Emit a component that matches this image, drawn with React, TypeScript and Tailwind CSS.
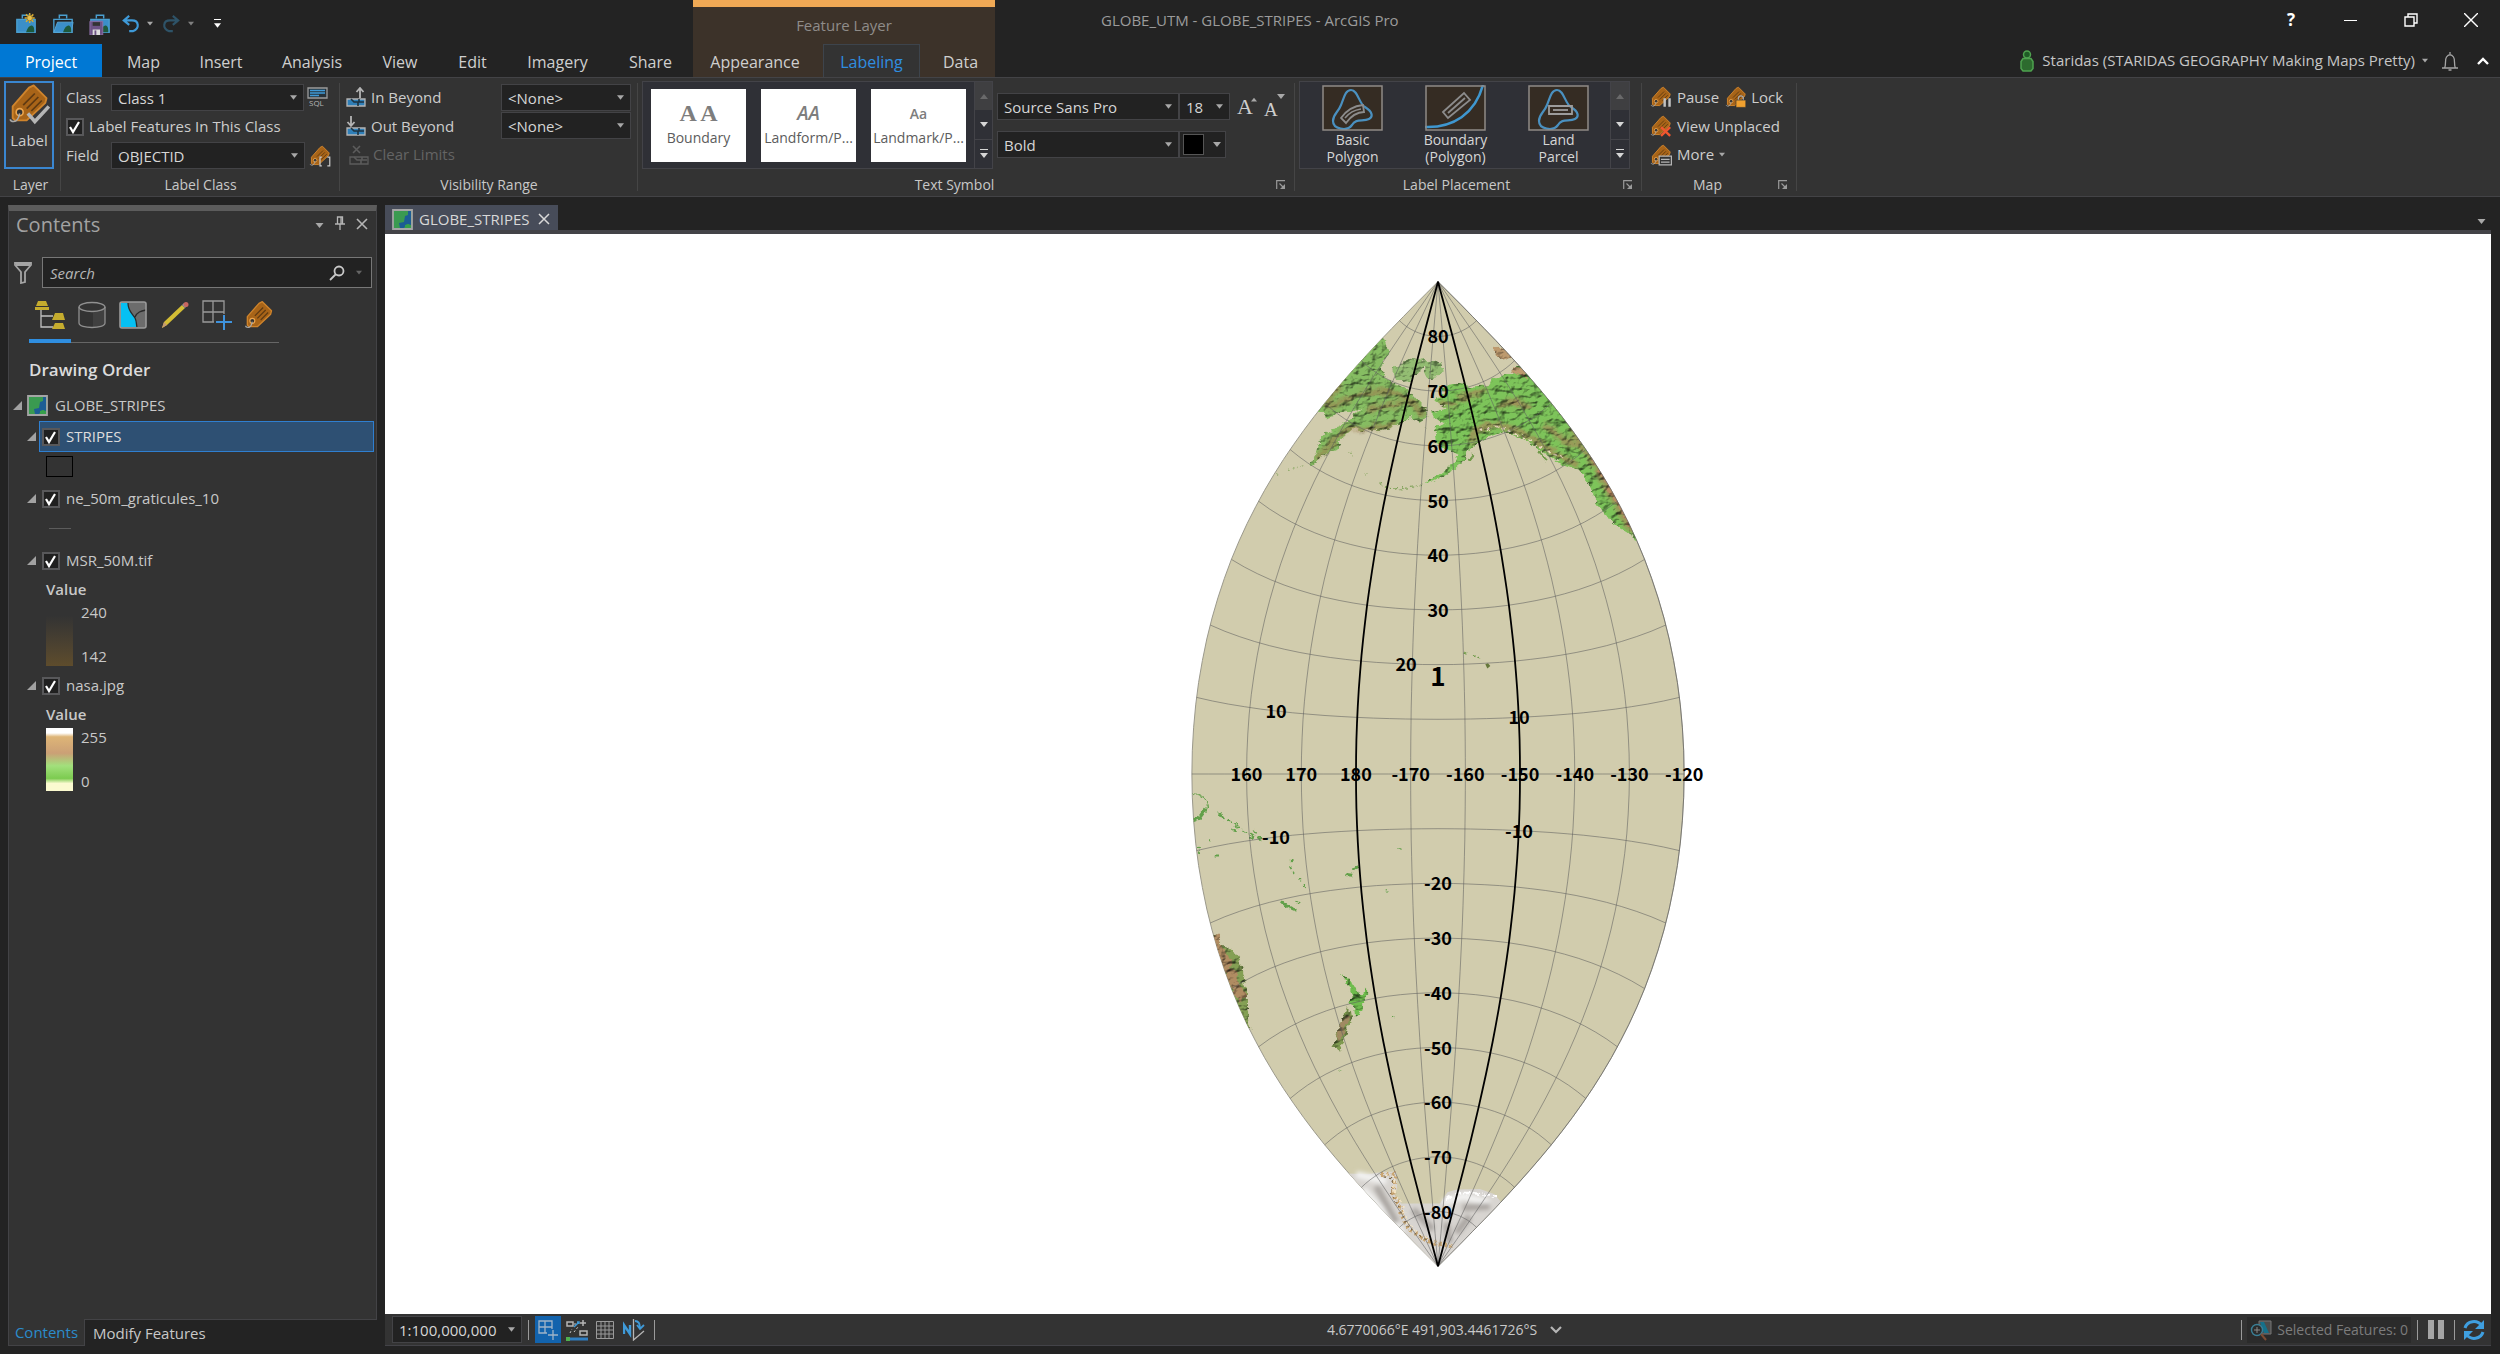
import type { ReactNode } from "react";

/* ---------- small shared pieces ---------- */

const Caret = ({ className = "" }: { className?: string }) => (
    <svg viewBox="0 0 8 5" className={`h-[5px] w-2 shrink-0 fill-[#a8a8a8] ${className}`} aria-hidden>
        <path d="M0 0h8L4 5z" />
    </svg>
);

const TagShape = () => (
    <g strokeLinejoin="round">
        <path d="M22 2l11 11-1 4-16 15H6L4 30V20L18 4z" fill="#a86418" stroke="#cf842c" strokeWidth="1.6" />
        <path d="M13 19l10-10M16 22l10-10M20 24l9-9" stroke="#5f3a12" strokeWidth="1.5" />
        <circle cx="10" cy="25" r="3" fill="#333" stroke="#eda64e" strokeWidth="1.4" />
        <path d="M10 26c-1 5-3 7-5 7s-3-1-3-2" fill="none" stroke="#a9a9a9" strokeWidth="1.4" />
    </g>
);

const TagIcon = ({ children, className = "size-[22px]" }: { children?: ReactNode; className?: string }) => (
    <svg viewBox="0 0 36 36" className={`shrink-0 ${className}`} aria-hidden>
        <TagShape />
        {children}
    </svg>
);

type SelectBoxProps = { label: string; options: string[]; className?: string };

const SelectBox = ({ label, options, className = "" }: SelectBoxProps) => (
    <span className={`relative flex h-[27px] items-center border border-[#434346] bg-[#222222] ${className}`}>
        <select
            aria-label={label}
            className="h-full w-full appearance-none bg-transparent pl-[6px] pr-5 pt-px text-[15px] text-[#d6d6d6] outline-none"
        >
            {options.map((option) => (
                <option key={option}>{option}</option>
            ))}
        </select>
        <Caret className="pointer-events-none absolute right-[6px] w-[7px] fill-[#939393]" />
    </span>
);

const Check = ({ id, label }: { id: string; label: string }) => (
    <span className="relative flex size-[18px] shrink-0">
        <input
            id={id}
            type="checkbox"
            defaultChecked
            aria-label={label}
            className="peer size-[18px] appearance-none border-2 border-[#58585a] bg-[#202020]"
        />
        <svg viewBox="0 0 18 18" className="pointer-events-none absolute inset-0 hidden peer-checked:block" aria-hidden>
            <path d="M4 9l3 5 6-10" fill="none" stroke="#fff" strokeWidth="2.2" />
        </svg>
    </span>
);

const DialogLauncher = ({ label }: { label: string }) => (
    <button aria-label={label} className="absolute bottom-[6px] right-[9px]">
        <svg viewBox="0 0 10 10" className="size-[10px]" aria-hidden>
            <path d="M.7 9V.7H9M3.5 3.5L7 7" fill="none" stroke="#9a9a9a" strokeWidth="1.2" />
            <path d="M9 4v5H4z" fill="#9a9a9a" />
        </svg>
    </button>
);

type GroupProps = { title: string; className: string; launcher?: boolean; children: ReactNode };

const Group = ({ title, className, launcher, children }: GroupProps) => (
    <section className={`relative flex shrink-0 flex-col pt-[3px] ${className}`}>
        <div className="flex h-[88px]">{children}</div>
        <h2 className={`flex flex-1 items-center justify-center pt-[3px] text-[14px] text-[#c8c8c8] ${launcher ? "pr-[24px]" : ""}`}>
            {title}
        </h2>
        {launcher && <DialogLauncher label={`${title} options`} />}
        <span className="absolute inset-y-[5px] right-0 w-px bg-[#454545]" />
    </section>
);

const GalleryScroll = ({ name }: { name: string }) => (
    <div className="ml-auto flex w-[19px] flex-col border-l border-[#434348]">
        <button aria-label={`Scroll ${name} up`} className="flex flex-1 items-center justify-center bg-[#3f3f41]">
            <Caret className="rotate-180 opacity-40" />
        </button>
        <button aria-label={`Scroll ${name} down`} className="flex flex-1 items-center justify-center border-b border-[#434348]">
            <Caret className="fill-[#d6d6d6]" />
        </button>
        <button aria-label={`Expand ${name}`} className="flex flex-1 flex-col items-center justify-center gap-[3px]">
            <span className="h-px w-2 bg-[#d6d6d6]" />
            <Caret className="fill-[#d6d6d6]" />
        </button>
    </div>
);

/* ---------- header ---------- */

const ProjectIcon = ({ kind }: { kind: "new" | "open" | "save" }) => (
    <svg viewBox="0 0 24 24" className="size-[22px]" aria-hidden>
        <path d="M8 6V2.500h8V6" fill="none" stroke="#4a9fd0" strokeWidth="1.6" />
        <path d="M2 7h20v14H2z" fill={kind === "open" ? "#232323" : "#3b8fc9"} stroke="#4a9fd0" strokeWidth="1.5" />
        {kind === "open" && <path d="M2 21l4-11h17l-2 11z" fill="#3b8fc9" stroke="#5aa9d8" />}
        <path d="M12 21c2-6 5-8 7-7s2 4 2 7z" fill="#1d5a3d" />
        {kind === "new" && (
            <g>
                <path d="M16 0v11M10.500 5.500h11M12 1.500l8 8M20 1.500l-8 8" stroke="#d9ae35" strokeWidth="1.6" />
                <circle cx="16" cy="5.500" r="3" fill="#e6c050" stroke="#9b7c25" />
            </g>
        )}
        {kind === "save" && (
            <g>
                <path d="M1 9h14v15H1z" fill="#6d5385" stroke="#8c70a6" />
                <path d="M4 10h8v4H4z" fill="#333" />
                <path d="M4 18h8v6H4z" fill="#ddd" />
                <path d="M6 19h2v5H6z" fill="#6d5385" />
            </g>
        )}
    </svg>
);

const UndoArrow = ({ redo }: { redo?: boolean }) => (
    <svg viewBox="0 0 20 20" className={`h-5 w-[18px] ${redo ? "-scale-x-100" : ""}`} aria-hidden>
        <path d="M8 1L2 6l6 5M2 6h9c8 0 9 9 1 12H8" fill="none" stroke={redo ? "#2e5368" : "#3f9ad8"} strokeWidth="2.4" />
    </svg>
);

const QuickAccess = () => (
    <div className="flex h-[44px] items-center pl-[15px] pt-[3px]">
        <button aria-label="New project"><ProjectIcon kind="new" /></button>
        <button aria-label="Open project" className="ml-[15px]"><ProjectIcon kind="open" /></button>
        <button aria-label="Save project" className="ml-[15px]"><ProjectIcon kind="save" /></button>
        <button aria-label="Undo" className="ml-[11px] flex items-center gap-[7px]">
            <UndoArrow /><Caret className="w-[6px]" />
        </button>
        <button aria-label="Redo" className="ml-[9px] flex items-center gap-[8px]">
            <UndoArrow redo /><Caret className="w-[6px] opacity-70" />
        </button>
        <button aria-label="Customize" className="ml-[20px] flex flex-col items-center gap-[3px]">
            <span className="h-px w-[7px] bg-white" />
            <Caret className="w-[7px] fill-white" />
        </button>
    </div>
);

const tabs = [
    { name: "Map", width: "w-[73px]" },
    { name: "Insert", width: "w-[82px]" },
    { name: "Analysis", width: "w-[100px]" },
    { name: "View", width: "w-[76px]" },
    { name: "Edit", width: "w-[69px]" },
    { name: "Imagery", width: "w-[101px]" },
    { name: "Share", width: "w-[85px]" },
];

const Header = () => (
    <header className="flex h-[77px] shrink-0 text-[16px]">
        <div className="w-[693px] shrink-0">
            <QuickAccess />
            <nav className="flex h-[33px] text-[#cfcfcf]">
                <button className="mr-[5px] w-[102px] bg-[#0078d4] pt-[3px] text-white">Project</button>
                {tabs.map((tab) => (
                    <button key={tab.name} className={`pt-[3px] ${tab.width}`}>{tab.name}</button>
                ))}
            </nav>
        </div>
        <div className="flex w-[302px] shrink-0 flex-col border-t-[7px] border-[#f0a955] bg-[#3c3229]">
            <p className="flex h-[37px] items-center justify-center text-[15px] text-[#8f8c89]">Feature Layer</p>
            <nav className="flex h-[33px] text-[#cfcfcf]">
                <button className="w-[130px] pr-[6px] pt-[3px]">Appearance</button>
                <button className="w-[97px] border border-b-0 border-[#3d444c] bg-[#333333] pt-[2px] text-[#2f8ee0]">Labeling</button>
                <button className="w-[75px] pl-[6px] pt-[3px]">Data</button>
            </nav>
        </div>
        <div className="min-w-0 flex-1">
            <div className="flex h-[44px] items-center">
                <h1 className="ml-[106px] pb-[3px] text-[15px] text-[#9b9b9b]">GLOBE_UTM - GLOBE_STRIPES - ArcGIS Pro</h1>
                <div className="ml-auto flex items-center pb-[4px] pr-[22px] text-white">
                    <button aria-label="Help" className="mr-[49px] text-[17px] font-bold">?</button>
                    <button aria-label="Minimize" className="mr-[47px]"><span className="block h-px w-[13px] bg-white" /></button>
                    <button aria-label="Restore" className="mr-[46px]">
                        <svg viewBox="0 0 14 14" className="size-[14px]" aria-hidden>
                            <path d="M1 4h9v9H1zM4 4V1h9v9h-3" fill="none" stroke="#fff" strokeWidth="1.4" />
                        </svg>
                    </button>
                    <button aria-label="Close">
                        <svg viewBox="0 0 14 14" className="size-[14px]" aria-hidden>
                            <path d="M0 0l14 14M14 0L0 14" stroke="#fff" strokeWidth="1.4" />
                        </svg>
                    </button>
                </div>
            </div>
            <div className="flex h-[33px] items-center justify-end pr-[11px] text-[15px] text-[#c6c6c6]">
                <svg viewBox="0 0 14 22" className="mr-[8px] h-[22px] w-[14px]" aria-hidden>
                    <circle cx="7" cy="4.500" r="3.500" fill="#1f5c26" stroke="#4ea24f" strokeWidth="1.5" />
                    <path d="M3 8.500h8l2 3v7l-2 2.500H3l-2-2.500v-7z" fill="#2d6b2e" stroke="#4ea24f" strokeWidth="1.5" />
                </svg>
                <button className="flex items-center gap-[7px]">
                    Staridas (STARIDAS GEOGRAPHY Making Maps Pretty)
                    <Caret className="w-[6px]" />
                </button>
                <button aria-label="Notifications" className="ml-[13px]">
                    <svg viewBox="0 0 18 20" className="h-5 w-[18px]" fill="none" stroke="#a5a5a5" strokeWidth="1.3" aria-hidden>
                        <path d="M1 17h16M3.500 17c2-4 0-8 2-11 2-3 5-3 7 0s0 7 2 11M9 3V1M7.500 19h3" />
                    </svg>
                </button>
                <button aria-label="Collapse ribbon" className="ml-[18px]">
                    <svg viewBox="0 0 12 8" className="h-2 w-3" aria-hidden>
                        <path d="M1 7l5-5 5 5" fill="none" stroke="#fff" strokeWidth="2.4" />
                    </svg>
                </button>
            </div>
        </div>
    </header>
);

/* ---------- ribbon ---------- */

const RangeIcon = ({ kind }: { kind: "in" | "out" | "clear" }) => {
    const muted = kind === "clear";
    return (
        <svg viewBox="0 0 20 20" className="size-5" aria-hidden>
            <path d="M1 12h18v7H1z" fill={muted ? "none" : "#2f7fb8"} stroke={muted ? "#5c5c5c" : "#b5b5b5"} strokeWidth="1.3" />
            <path d="M5 12l3 3h4v4M13 12v3h5" fill="none" stroke={muted ? "#5c5c5c" : "#1f3340"} strokeWidth="1.600" />
            {kind === "in" && <path d="M14 11V1M10.500 5L14 1l3.500 4" fill="none" stroke="#b5b5b5" strokeWidth="1.800" />}
            {kind === "out" && <path d="M5 0v10M1.500 6L5 10l3.500-4" fill="none" stroke="#b5b5b5" strokeWidth="1.800" />}
            {muted && <path d="M4 1l7 7M11 1L4 8" stroke="#5c5c5c" strokeWidth="1.6" />}
        </svg>
    );
};

const textStyles = [
    { name: "Boundary", sample: "A A", look: "text-[24px] font-bold [font-family:'Liberation_Serif',serif]" },
    { name: "Landform/P...", sample: "AA", look: "text-[19px] font-semibold italic" },
    { name: "Landmark/P...", sample: "Aa", look: "text-[14px] font-semibold" },
];

const blob = "M29 5c7 0 8 14 14 17 8 5 8 10 4 12-6 3-13-1-17 6-5 7-19 4-19-4 0-7 5-8 8-16 3-7 4-15 10-15z";

const placements = [
    {
        name: "Basic Polygon",
        art: (
            <>
                <path d={blob} fill="none" stroke="#4a90bf" strokeWidth="2.200" />
                <path d="M19 33c5-7 11-12 22-13l1 7c-8 0-13 4-18 11z" fill="none" stroke="#8c8c8c" strokeWidth="1.800" />
                <path d="M23 33c4-5 9-8 16-9" fill="none" stroke="#8c8c8c" strokeWidth="1.6" />
            </>
        ),
    },
    {
        name: "Boundary (Polygon)",
        art: (
            <>
                <path d="M0 42c28 1 50-13 58-42" fill="none" stroke="#3f97cf" strokeWidth="2.600" />
                <path d="M18 27L39 8l6 7-22 18z" fill="none" stroke="#8c8c8c" strokeWidth="1.800" />
                <path d="M23 28l17-15" stroke="#8c8c8c" strokeWidth="1.800" />
            </>
        ),
    },
    {
        name: "Land Parcel",
        art: (
            <>
                <path d={blob} fill="none" stroke="#4a90bf" strokeWidth="2.200" />
                <path d="M21 21h23v8H21z" fill="none" stroke="#9c9c9c" strokeWidth="1.800" />
                <path d="M25 25h15" stroke="#9c9c9c" strokeWidth="1.800" />
            </>
        ),
    },
];

const Ribbon = () => (
    <div className="flex h-[120px] shrink-0 overflow-hidden border-y border-[#434346] bg-[#333333] text-[15px] text-[#cdcdcd]">
        <Group title="Layer" className="w-[61px]">
            <button className="ml-[4px] flex w-[50px] flex-col items-center border-2 border-[#3a86d0] bg-[#363638]">
                <TagIcon className="h-[42px] w-[42px]">
                    <path d="M17 26l6 7 12-13" fill="none" stroke="#b5b5b5" strokeWidth="3" />
                </TagIcon>
                <span className="mt-[4px]">Label</span>
            </button>
        </Group>

        <Group title="Label Class" className="w-[279px]">
            <div className="ml-[5px] mt-[3px] flex flex-col">
                <div className="flex items-center">
                    <span className="w-[45px]">Class</span>
                    <SelectBox label="Class" options={["Class 1"]} className="w-[193px]" />
                    <button aria-label="SQL query" className="ml-[3px]">
                        <svg viewBox="0 0 21 22" className="h-[22px] w-[21px]" aria-hidden>
                            <path d="M1 1h19v10H1z" fill="#26323a" stroke="#9c9c9c" strokeWidth="1.300" />
                            <path d="M3 3.500h15M3 6h15M3 8.500h9" stroke="#3f9ad8" strokeWidth="1.300" />
                            <text x="2" y="19" fontSize="8" fill="#b5b5b5">SQL</text>
                        </svg>
                    </button>
                </div>
                <label htmlFor="label-features" className="flex h-[31px] items-center gap-[5px]">
                    <Check id="label-features" label="Label Features In This Class" />
                    Label Features In This Class
                </label>
                <div className="flex items-center">
                    <span className="w-[45px]">Field</span>
                    <SelectBox label="Field" options={["OBJECTID"]} className="w-[194px]" />
                    <button aria-label="Label expression" className="ml-[4px]">
                        <TagIcon>
                            <path d="M21 20h-3v14h3M30 20h4v14h-4" fill="none" stroke="#c9c9c9" strokeWidth="2" />
                        </TagIcon>
                    </button>
                </div>
            </div>
        </Group>

        <Group title="Visibility Range" className="w-[298px]">
            <div className="flex w-[155px] flex-col pl-[6px] pt-px">
                <span className="flex h-[30px] items-center gap-[5px]"><RangeIcon kind="in" />In Beyond</span>
                <span className="flex h-[29px] items-center gap-[5px]"><RangeIcon kind="out" />Out Beyond</span>
                <button disabled className="flex h-[29px] items-center gap-[4px] pl-[3px] text-[#646464]">
                    <RangeIcon kind="clear" />Clear Limits
                </button>
            </div>
            <div className="ml-[6px] mt-[3px] flex flex-col gap-px">
                <SelectBox label="In beyond scale" options={["<None>"]} className="w-[130px]" />
                <SelectBox label="Out beyond scale" options={["<None>"]} className="w-[130px]" />
            </div>
        </Group>

        <Group title="Text Symbol" className="w-[657px]" launcher>
            <div className="ml-[4px] flex w-[351px] border border-[#434348] bg-[#2f3036]">
                <div className="flex gap-[15px] px-[8px] py-[7px]">
                    {textStyles.map((style) => (
                        <button key={style.name} className="flex h-[73px] w-[95px] flex-col items-center bg-white pt-[10px] text-[14px] text-[#5c5c5c]">
                            <span className={`flex h-[28px] items-center text-[#7d7d7d] ${style.look}`}>{style.sample}</span>
                            <span className="whitespace-nowrap">{style.name}</span>
                        </button>
                    ))}
                </div>
                <GalleryScroll name="text symbols" />
            </div>
            <div className="ml-[4px] mt-[12px] flex flex-col gap-[11px]">
                <div className="flex items-center">
                    <SelectBox label="Font" options={["Source Sans Pro"]} className="w-[182px]" />
                    <SelectBox label="Font size" options={["18"]} className="w-[51px]" />
                    <button aria-label="Increase font size" className="ml-[7px] flex text-[22px] leading-none [font-family:'Liberation_Serif',serif]">
                        A<Caret className="-ml-[2px] mt-px w-[6px] rotate-180" />
                    </button>
                    <button aria-label="Decrease font size" className="ml-[7px] flex text-[19px] leading-none [font-family:'Liberation_Serif',serif]">
                        <span className="mt-[6px]">A</span><Caret className="-ml-px" />
                    </button>
                </div>
                <div className="flex">
                    <SelectBox label="Font style" options={["Bold"]} className="w-[182px]" />
                    <button aria-label="Text color" className="flex h-[27px] w-[47px] items-center justify-between border border-[#434346] bg-[#222222] px-[3px]">
                        <span className="size-[21px] border border-[#555555] bg-black" />
                        <Caret className="mr-px" />
                    </button>
                </div>
            </div>
        </Group>

        <Group title="Label Placement" className="w-[347px]" launcher>
            <div className="ml-[4px] flex w-[331px] border border-[#434348] bg-[#2f3036]">
                <div className="flex pl-px">
                    {placements.map((item) => (
                        <button key={item.name} className="flex w-[103px] flex-col items-center px-[16px] pt-[3px] text-[14px] leading-[17px] text-[#d6d6d6]">
                            <svg viewBox="0 0 61 46" className="h-[46px] w-[61px]" aria-hidden>
                                <path d="M.5.5h60v45H.500z" fill="#352c23" />
                                {item.art}
                                <path d="M1 1h59v44H1z" fill="none" stroke="#8f8b88" strokeWidth="1.500" />
                            </svg>
                            <span>{item.name}</span>
                        </button>
                    ))}
                </div>
                <GalleryScroll name="label placements" />
            </div>
        </Group>

        <Group title="Map" className="w-[155px]" launcher>
            <div className="flex flex-col pl-[8px] pt-px">
                <div className="flex h-[30px] items-center">
                    <button className="flex items-center gap-[5px]">
                        <TagIcon><path d="M24 20v14M32 20v14" stroke="#c2c2c2" strokeWidth="4" /></TagIcon>
                        Pause
                    </button>
                    <button className="ml-[6px] flex items-center gap-[4px]">
                        <TagIcon>
                            <path d="M22 24v-4c0-5 8-5 8 0v4" fill="none" stroke="#a9a9a9" strokeWidth="2" />
                            <path d="M18 23h16v12H18z" fill="#f0a02f" stroke="#333" />
                        </TagIcon>
                        Lock
                    </button>
                </div>
                <button className="flex h-[29px] items-center gap-[5px] whitespace-nowrap">
                    <TagIcon><path d="M18 20l15 14M33 20L18 34" stroke="#f0572f" strokeWidth="4" /></TagIcon>
                    View Unplaced
                </button>
                <button className="flex h-[29px] items-center gap-[5px]">
                    <TagIcon>
                        <path d="M15 20h20v14H15z" fill="#333" stroke="#b5b5b5" strokeWidth="2" />
                        <path d="M18 25h14M18 29.500h14" stroke="#b5b5b5" strokeWidth="2" />
                    </TagIcon>
                    More
                    <Caret className="w-[6px]" />
                </button>
            </div>
        </Group>
    </div>
);

/* ---------- contents pane ---------- */

const MapGlyph = () => (
    <svg viewBox="0 0 21 21" className="size-[21px] shrink-0" aria-hidden>
        <path d="M1 1h19v19H1z" fill="#3a9a50" stroke="#a5a5a5" strokeWidth="1.800" />
        <path d="M19 2v14l-4-1-3 4H8l-1-5 5-1 1-6 3-1V2z" fill="#1c5d94" />
        <path d="M13 19v-3l4-1 2 4z" fill="#36a04b" />
    </svg>
);

const Twisty = () => (
    <button aria-label="Collapse" className="flex shrink-0">
        <svg viewBox="0 0 10 10" className="size-[9px] fill-[#a2a2a2]" aria-hidden>
            <path d="M10 0v10H0z" />
        </svg>
    </button>
);

const LayerRow = ({ name, selected }: { name: string; selected?: boolean }) => (
    <div className="flex h-[31px] items-center gap-[3px] pl-[18px] pr-[2px]">
        <Twisty />
        <label
            className={`flex h-full flex-1 items-center gap-[6px] border pl-[2px] ${
                selected ? "border-[#2f7fd0] bg-[#2e5073] text-[#dddddd]" : "border-transparent"
            }`}
        >
            <Check id={name} label={name} />
            {name}
        </label>
    </div>
);

const Ramp = ({ high, low, fill }: { high: string; low: string; fill: string }) => (
    <div className="ml-[37px] flex h-[63px] gap-[8px]">
        <span className={`w-[27px] ${fill}`} />
        <span className="flex flex-col justify-between leading-[19px]">
            <span>{high}</span>
            <span>{low}</span>
        </span>
    </div>
);

const ContentsTabs = () => (
    <div className="ml-[20px] mt-[12px] flex w-[250px] border-b border-[#666666]">
        <button aria-label="List by drawing order" className="-mb-px flex h-[43px] w-[42px] justify-center border-b-4 border-[#2f8ee0]">
            <svg viewBox="0 0 30 30" className="size-[30px]" aria-hidden>
                <path d="M6 10v17h12M6 16h12" fill="none" stroke="#c2c2c2" strokeWidth="1.300" />
                <path d="M3 1h8l2 5H1zM0 7h14v3H0zM20 13h8l2 7H17zM20 23h8l2 6H17z" fill="#c5ac2e" />
            </svg>
        </button>
        <button aria-label="List by data source" className="flex w-[41px] justify-center pt-px">
            <svg viewBox="0 0 28 28" className="size-[28px]" fill="none" stroke="#909090" strokeWidth="1.300" aria-hidden>
                <path d="M15 11l12-3v14c-1 3-6 5-12 5z" fill="#404040" stroke="none" />
                <ellipse cx="14" cy="6" rx="13" ry="4.500" />
                <path d="M1 6v16c0 6 26 6 26 0V6" />
            </svg>
        </button>
        <button aria-label="List by selection" className="flex w-[42px] justify-center pt-px">
            <svg viewBox="0 0 28 28" className="size-[28px]" aria-hidden>
                <rect x="1" y="1" width="26" height="26" rx="2" fill="#6c6c6c" />
                <path d="M2 2h7c0 8 4 10 7 15 2 4 1 6 2 9H2z" fill="#06c0f3" />
                <path d="M9 2c0 8 4 10 7 15 2 4 1 6 2 9M16 16c2-5 6-6 11-7" fill="none" stroke="#2a2a2a" strokeWidth="1.300" />
                <rect x="1" y="1" width="26" height="26" rx="2" fill="none" stroke="#9a9a9a" strokeWidth="1.600" />
            </svg>
        </button>
        <button aria-label="List by editing" className="flex w-[42px] justify-center pt-px">
            <svg viewBox="0 0 28 28" className="size-[28px]" aria-hidden>
                <path d="M1 27l2-6L21 4l3 3L6 24z" fill="#d3bd35" />
                <path d="M1 27l2-6 3 3z" fill="#c79a72" />
                <path d="M21 4l2-2 3 3-2 2z" fill="#9a9a9a" />
                <circle cx="25" cy="3.500" r="2.500" fill="#c86660" />
            </svg>
        </button>
        <button aria-label="List by snapping" className="flex w-[42px] justify-center">
            <svg viewBox="0 0 30 30" className="size-[30px]" fill="none" strokeWidth="1.300" aria-hidden>
                <path d="M22 14V1H1v21h11M1 12h21M11 1v21" stroke="#9a9a9a" />
                <path d="M22 15v15M14 22h16" stroke="#3f93dd" strokeWidth="2" />
            </svg>
        </button>
        <button aria-label="List by labeling" className="flex w-[41px] justify-center">
            <TagIcon className="size-[30px]" />
        </button>
    </div>
);

const ContentsPane = () => (
    <aside className="ml-[8px] flex w-[369px] shrink-0 flex-col text-[15px] text-[#c8c8c8]">
        <div className="flex flex-1 flex-col border-x border-t-[6px] border-x-[#434346] border-t-[#5c5c5c] bg-[#333333]">
            <div className="flex h-[28px] items-center pl-[7px] pr-[8px]">
                <h2 className="text-[20px] text-[#a2a2a2]">Contents</h2>
                <button aria-label="Pane menu" className="ml-auto"><Caret className="w-[9px]" /></button>
                <button aria-label="Auto hide" className="mb-[4px] ml-[11px]">
                    <svg viewBox="0 0 10 14" className="h-[14px] w-[10px]" fill="none" stroke="#b5b5b5" strokeWidth="1.300" aria-hidden>
                        <path d="M2.500 8V1h5v7M6 1v7M0 8h10M5 8v6" />
                    </svg>
                </button>
                <button aria-label="Close pane" className="mb-[3px] ml-[11px]">
                    <svg viewBox="0 0 12 12" className="size-[12px]" aria-hidden>
                        <path d="M1 1l10 10M11 1L1 11" stroke="#b5b5b5" strokeWidth="1.600" />
                    </svg>
                </button>
            </div>
            <div className="mt-[18px] flex items-center pl-[5px] pr-[4px]">
                <button aria-label="Filter">
                    <svg viewBox="0 0 18 22" className="h-[22px] w-[18px]" fill="none" stroke="#a5a5a5" strokeWidth="1.800" aria-hidden>
                        <path d="M1 1h16v2l-6 7v10l-4 1V10L1 3zM2 3h14" />
                    </svg>
                </button>
                <div className="ml-[10px] flex h-[31px] flex-1 items-center border border-[#777777] bg-[#222222] pl-[7px] pr-[9px]">
                    <input
                        aria-label="Search"
                        placeholder="Search"
                        className="min-w-0 flex-1 bg-transparent pt-px italic outline-none placeholder:text-[#b5b5b5]"
                    />
                    <button aria-label="Run search">
                        <svg viewBox="0 0 16 16" className="size-[16px]" fill="none" stroke="#c8c8c8" strokeWidth="1.800" aria-hidden>
                            <circle cx="10" cy="6" r="4.500" />
                            <path d="M7 9l-6 6" />
                        </svg>
                    </button>
                    <Caret className="ml-[11px] w-[6px] opacity-50" />
                </div>
            </div>
            <ContentsTabs />
            <h3 className="ml-[20px] mt-[14px] text-[17px] font-semibold leading-[26px] text-[#dcdcdc]">Drawing Order</h3>
            <div className="mt-[7px] flex h-[31px] items-center pl-[4px]">
                <Twisty />
                <span className="ml-[5px] flex items-center gap-[7px]"><MapGlyph />GLOBE_STRIPES</span>
            </div>
            <LayerRow name="STRIPES" selected />
            <span className="ml-[37px] mt-[4px] h-[21px] w-[27px] border border-black" />
            <div className="mt-[6px]"><LayerRow name="ne_50m_graticules_10" /></div>
            <span className="ml-[40px] mt-[14px] h-px w-[22px] bg-[#5c5c5c]" />
            <div className="mt-[16px]"><LayerRow name="MSR_50M.tif" /></div>
            <p className="ml-[37px] font-semibold leading-[27px]">Value</p>
            <Ramp high="240" low="142" fill="bg-linear-to-b from-[#333333] from-20% to-[#5e4c2c]" />
            <div className="mt-[4px]"><LayerRow name="nasa.jpg" /></div>
            <p className="ml-[37px] font-semibold leading-[27px]">Value</p>
            <Ramp
                high="255"
                low="0"
                fill="bg-[linear-gradient(180deg,#ffffff_8%,#deb577_14%,#cba076_40%,#a2e07c_60%,#7ccb50_80%,#fbfad0_88%)]"
            />
        </div>
        <nav className="flex h-[27px]">
            <button className="w-[77px] border border-t-0 border-[#434346] bg-[#333333] text-[#2b8ccb]">Contents</button>
            <button className="flex-1 border-t border-[#434346] pl-[8px] text-left">Modify Features</button>
        </nav>
    </aside>
);

/* ---------- globe gore ---------- */

const CX = 280;
const CY = 500;
const PX_PER_DEG = 5.47;
const RAD = Math.PI / 180;

// Cassini projection, lon measured from the central meridian (165 W)
const project = (lon: number, lat: number) => {
    const x = Math.asin(Math.cos(lat * RAD) * Math.sin(lon * RAD)) / RAD;
    const y = Math.atan2(Math.sin(lat * RAD), Math.cos(lat * RAD) * Math.cos(lon * RAD)) / RAD;
    return `${(CX + x * PX_PER_DEG).toFixed(1)} ${(CY - y * PX_PER_DEG).toFixed(1)}`;
};

const steps = (from: number, to: number, by: number) =>
    Array.from({ length: Math.round((to - from) / by) + 1 }, (_, i) => from + i * by);

const meridian = (lon: number) => "M" + steps(-90, 90, 3).map((lat) => project(lon, lat)).join("L");
const parallel = (lat: number) => "M" + steps(-45, 45, 3).map((lon) => project(lon, lat)).join("L");

const outline =
    "M" +
    [...steps(-90, 90, 3).map((lat) => project(-45, lat)), ...steps(-90, 90, 3).map((lat) => project(45, -lat))].join("L") +
    "Z";

const labels: [string, number, number][] = [
    ...[80, 70, 60, 50, 40, 30, -20, -30, -40, -50, -60, -70, -80].map(
        (lat): [string, number, number] => [String(lat), CX, CY - lat * PX_PER_DEG],
    ),
    ...["160", "170", "180", "-170", "-160", "-150", "-140", "-130", "-120"].map(
        (text, i): [string, number, number] => [text, CX + (i * 10 - 35) * PX_PER_DEG, CY],
    ),
    ["20", 248, 390],
    ["10", 118, 437],
    ["10", 361, 443],
    ["-10", 118, 563],
    ["-10", 361, 557],
];

const GlobeGore = () => (
    <svg viewBox="0 0 560 1000" className="h-[1000px] w-[560px] shrink-0 overflow-visible" role="img" aria-label="Globe stripe 1">
        <defs>
            <clipPath id="gore"><path d={outline} /></clipPath>
            <filter id="relief" x="-5%" y="-5%" width="110%" height="110%" colorInterpolationFilters="sRGB">
                <feTurbulence type="fractalNoise" baseFrequency="0.03 0.05" numOctaves="5" seed="7" result="noise" />
                <feDisplacementMap in="SourceGraphic" in2="noise" scale="26" xChannelSelector="R" yChannelSelector="G" result="land" />
                <feDiffuseLighting in="noise" surfaceScale="10" diffuseConstant="1.3" lightingColor="#ffffff" result="light">
                    <feDistantLight azimuth="225" elevation="50" />
                </feDiffuseLighting>
                <feComposite in="land" in2="light" operator="arithmetic" k1="0.8" k2="0.2" result="shaded" />
                <feComposite in="shaded" in2="land" operator="in" />
            </filter>
            <filter id="coast" x="-20%" y="-20%" width="140%" height="140%">
                <feTurbulence type="fractalNoise" baseFrequency="0.09" numOctaves="3" seed="3" result="noise" />
                <feDisplacementMap in="SourceGraphic" in2="noise" scale="14" xChannelSelector="R" yChannelSelector="G" />
            </filter>
            <filter id="soft"><feGaussianBlur stdDeviation="7" /></filter>
        </defs>
        <path d={outline} fill="#d1ccad" stroke="#9b998c" />
        <g clipPath="url(#gore)">
            {/* northern land */}
            <g transform="translate(21.7 -4.400) scale(.3333)">
                <g filter="url(#relief)">
                    <path d="M595 190l22 22 12 35-24 35 7 40 42 25 38 22 24 28 30 32-4 12-26 16-26-17-33 30-52 12-42-2-42-4-30 28-18 38-32 10-42 34-10-2 22-35 12-45 24-24 36-8 22-20 36-26-40 2-30 6-28 10-16-14-20-12z" fill="#86bd62" />
                    <path d="M766 392l34-20-18-22 48-8 50 8 46-4 16-22 58-12 10-24 60 20 160 190 100 170 60 150-22-10-44-28-42-36-32-46-24-58-26-36-50-14-40-30-50-30-50-30-40-14-42 14-38 20-30 26-12 34-28 26-32 16-50 24-4-6 54-34 30-20 16-30-34-16-32-24-4-40 34-16-40-16v-20l40-6-24-20z" fill="#7dc45a" />
                    <path d="M440 415c50-10 60-30 90-40 60-10 100-20 150 10 20 20 40 40 60 50M410 570c30-30 60-70 100-95 30 8 70 2 140-12M480 345l-45 60M560 420l110-20" fill="none" stroke="#9c7a4e" strokeWidth="13" opacity=".85" filter="url(#soft)" />
                    <path d="M875 520c10-40 30-60 90-50 60 10 110 50 230 120M990 400l60 10M1170 480c60 70 130 210 190 310M1090 465l100 70M830 385c40 0 60-10 90-25M960 410l60-20M780 400l50 10" fill="none" stroke="#a88259" strokeWidth="15" opacity=".85" filter="url(#soft)" />
                    <path d="M900 480c60-16 90 0 160 40l100 50" fill="none" stroke="#ecd9c0" strokeWidth="6" strokeDasharray="10 12" />
                    <path d="M1230 560l130 230h50L1260 540z" fill="#b78c62" />
                    <path d="M945 235l35-2 20 34-34 10-22-20zM995 292l40 8 6 22-36-6z" fill="#bd9a6e" />
                    <path d="M640 300l22-16 30-20 28 4 16 18-20 26-26 18-38 2zM728 272l44-2 20 32-14 18-36 4-8-26z" fill="#93bd72" />
                </g>
                <g filter="url(#coast)" fill="none" stroke="#6f9a48">
                    <path d="M868 572l14-18M1078 548l24 26" strokeWidth="7" />
                    <path d="M600 642l22 14 40 2 40-6 34-10" strokeWidth="3" strokeDasharray="9 7" />
                    <path d="M510 545l10 22M555 612l6 3M735 472h12M290 615l12-4M325 603l50-16" strokeWidth="2" strokeDasharray="6 8" />
                    <path d="M855 1150l5 2M880 1158l26 8" strokeWidth="5" strokeDasharray="8 6" />
                </g>
                <path d="M917 1184l8-3 7 8-9 8z" fill="#66783a" />
            </g>
            {/* southern land and Antarctica */}
            <g transform="translate(21.7 495.600) scale(.3333)">
                <g filter="url(#coast)" fill="none" stroke="#62a04a">
                    <path d="M38 72c24 0 40 14 48 32" strokeWidth="3" />
                    <path d="M42 152c14-4 26-14 34-36" strokeWidth="11" />
                    <path d="M84 104v12M118 128l16 24" strokeWidth="7" />
                    <path d="M145 152l80 52M155 178l20 8M208 205h36M220 180l25 38" strokeWidth="5" strokeDasharray="18 7" />
                    <path d="M52 232l10 10-6 12M88 212h6M105 258h10" strokeWidth="6" strokeDasharray="10 6" />
                    <path d="M336 268v12M330 290l14 24M362 325v8M374 346l4 14M350 396l14 8" strokeWidth="5" strokeDasharray="10 9" />
                    <path d="M302 394c14 14 30 22 48 28" strokeWidth="8" />
                    <path d="M500 315l18 2M518 298l18-6" strokeWidth="9" />
                    <path d="M652 238h16M618 364h6M636 741h8M480 902h5" strokeWidth="4" />
                </g>
                <g filter="url(#relief)">
                    <path d="M100 490l32 34 38 26 20 50 12 60v50l14 74-18-14L90 560z" fill="#84a054" />
                    <path d="M100 500l60 130 30 60" fill="none" stroke="#b08c62" strokeWidth="30" />
                    <path d="M476 610l30 18 20 30 18 12 16-18v30l-14 20-8 34-10 6-2-30-16-8 8-20-12-34z" fill="#6fbd4d" />
                    <path d="M500 716l18 6 2 22-20 40-6 30-14 24 4 8-24-16 6-24 18-34 14-40z" fill="#7f9a50" />
                    <path d="M506 740l-34 74" stroke="#a08a62" strokeWidth="12" />
                </g>
                <path d="M505 1212l60 2 38-6 46-2 4 48-8 22 20 26h116l22-34 28-8 70-2 44 16 24 30-50 60-140 140h-20L640 1400l-160-170z" fill="#d8d5d1" />
                <g filter="url(#soft)" fill="none" strokeWidth="20">
                    <path d="M530 1215l90 20M550 1260l120 130M790 1300l60-20 80 20" stroke="#f3f3f2" />
                    <path d="M590 1250l60 110M850 1315l80-5M830 1390l40-50M700 1320l60 60M800 1360l10 60" stroke="#aaa6a2" />
                </g>
                <g filter="url(#coast)" fill="none">
                    <path d="M604 1214h44l-8 60 20 40 14 40 20 30 50 30 76 18" stroke="#c9a672" strokeWidth="13" strokeDasharray="9 7" />
                    <path d="M612 1222l26 6-2 44 24 44 14 36 24 32 40 26" stroke="#7f6742" strokeWidth="4" strokeDasharray="7 9" />
                    <path d="M618 1216l26 8-2 40 26 44 20 60 56 42" stroke="#f5e6c6" strokeWidth="5" strokeDasharray="6 11" />
                    <path d="M800 1290c30-30 90-20 150-8" stroke="#ffffff" strokeWidth="8" strokeDasharray="20 9" />
                </g>
            </g>
        </g>
        <g fill="none" stroke="#5c5c5c" strokeOpacity=".55">
            {steps(-35, 45, 10).filter((lon) => Math.abs(lon) !== 15).map((lon) => (
                <path key={lon} d={meridian(lon)} />
            ))}
            {steps(-80, 80, 10).map((lat) => (
                <path key={lat} d={parallel(lat)} />
            ))}
        </g>
        <path d={meridian(-15) + meridian(15)} fill="none" stroke="#000" strokeWidth="1.800" strokeLinejoin="round" />
        <g className="text-[18px] font-bold [font-family:'Noto_Sans_CJK_SC',sans-serif]" textAnchor="middle">
            {labels.map(([text, x, y]) => (
                <text key={`${text}-${x}`} x={x} y={Math.round(y + 7)}>{text}</text>
            ))}
            <text x={CX} y={412} className="text-[26px]">1</text>
        </g>
    </svg>
);

/* ---------- map view ---------- */

const Divider = ({ className = "" }: { className?: string }) => (
    <span className={`h-[20px] w-px bg-[#9a9a9a] ${className}`} />
);

const StatusBar = () => (
    <footer className="flex h-[32px] shrink-0 items-center border-b border-[#434348] bg-[#333333] text-[15px] text-[#c8c8c8]">
        <div className="flex flex-1 items-center pl-[7px]">
            <SelectBox label="Map scale" options={["1:100,000,000"]} className="w-[130px]" />
            <Divider className="ml-[6px]" />
            <button aria-label="Snapping" className="ml-[6px] flex h-[27px] w-[26px] items-center justify-center bg-[#1263ad]">
                <svg viewBox="0 0 20 20" className="size-5" fill="none" stroke="#9fb4c8" strokeWidth="1.300" aria-hidden>
                    <path d="M14 9V1H1v12h8M1 7h13M7 1v12M15 10v10M10 15h10" />
                </svg>
            </button>
            <button aria-label="Dynamic constraints" className="ml-[5px]">
                <svg viewBox="0 0 22 22" className="size-[22px]" fill="none" aria-hidden>
                    <path d="M1 3h6v4H1zM14 12h7v4h-7zM17 1v6M14 4h6" stroke="#b5b5b5" strokeWidth="1.500" />
                    <path d="M4 14l2-4M8 5h4M8 13l4-5" stroke="#c8c8c8" strokeDasharray="2 2" />
                    <path d="M3 20h19" stroke="#2f7fc4" strokeWidth="3" />
                    <path d="M8 8l5-5M11 3h2v2" stroke="#3f9ad8" strokeWidth="1.500" />
                    <rect x="0" y="18" width="4" height="4" fill="#4fb04f" />
                </svg>
            </button>
            <button aria-label="Grid" className="ml-[8px]">
                <svg viewBox="0 0 18 18" className="size-[18px]" fill="none" stroke="#9a9a9a" aria-hidden>
                    <path d="M.5.5h17v17H.500zM5 0v18M9 0v18M13 0v18M0 5h18M0 9h18M0 13h18" />
                </svg>
            </button>
            <button aria-label="Correct to north" className="ml-[9px]">
                <svg viewBox="0 0 22 22" className="size-[22px]" fill="none" aria-hidden>
                    <path d="M1 15V6l6 9V6" stroke="#3f9ad8" strokeWidth="2.400" />
                    <path d="M10.500 0v21L21 12" stroke="#b5b5b5" strokeWidth="1.300" />
                    <path d="M12 2c4 0 5 3 5 7M14 6l3 4 4-4" stroke="#3f9ad8" strokeWidth="1.800" />
                </svg>
            </button>
            <Divider className="ml-[9px]" />
        </div>
        <button className="flex items-center gap-[13px] pl-[12px] text-[14px]">
            4.6770066°E 491,903.4461726°S
            <svg viewBox="0 0 12 8" className="h-2 w-3" aria-hidden>
                <path d="M1 1l5 5 5-5" fill="none" stroke="#b5b5b5" strokeWidth="2.200" />
            </svg>
        </button>
        <div className="flex flex-1 items-center justify-end pr-[6px]">
            <Divider />
            <button className="ml-[5px] flex h-[26px] items-center gap-[5px] bg-[#2b2b2b] px-[3px] text-[14px] text-[#7c7c7c]">
                <svg viewBox="0 0 22 22" className="size-[22px]" fill="none" aria-hidden>
                    <path d="M9 2h12v13H9z" fill="#4d4d4d" stroke="#777" />
                    <path d="M10 3h4l5 11h-5z" fill="#15708a" />
                    <circle cx="7" cy="11" r="5.500" fill="#2b2b2b" stroke="#3a7f96" strokeWidth="1.400" />
                    <path d="M7 8v6M4 11h6" stroke="#8a8a8a" />
                    <path d="M11 15l5 6" stroke="#7d4c33" strokeWidth="2" />
                </svg>
                Selected Features: 0
            </button>
            <Divider className="ml-[6px]" />
            <button aria-label="Pause drawing" className="ml-[10px] flex gap-[4px]">
                <span className="h-[19px] w-[6px] bg-[#a5a5a5]" />
                <span className="h-[19px] w-[6px] bg-[#a5a5a5]" />
            </button>
            <Divider className="ml-[10px]" />
            <button aria-label="Refresh" className="ml-[8px]">
                <svg viewBox="0 0 22 22" className="size-[22px]" fill="none" stroke="#3f9fe0" strokeWidth="3" aria-hidden>
                    <path d="M2 9c2-7 12-9 17-2M20 13c-2 7-12 9-17 2" />
                    <path d="M21 1v9h-9zM1 21v-9h9z" fill="#3f9fe0" stroke="none" />
                </svg>
            </button>
        </div>
    </footer>
);

const MapView = () => (
    <main className="ml-[8px] mr-[9px] flex min-w-0 flex-1 flex-col">
        <div className="flex h-[25px] shrink-0 items-center">
            <div className="flex h-full w-[173px] items-center bg-[#474c59] pl-[7px] pt-[3px] text-[15px] text-[#d8d8d8]">
                <MapGlyph />
                <span className="ml-[6px]">GLOBE_STRIPES</span>
                <button aria-label="Close view" className="ml-auto mr-[8px]">
                    <svg viewBox="0 0 12 12" className="size-[12px]" aria-hidden>
                        <path d="M1 1l10 10M11 1L1 11" stroke="#d8d8d8" strokeWidth="1.500" />
                    </svg>
                </button>
            </div>
            <button aria-label="View list" className="ml-auto mr-[5px] mt-[7px]"><Caret className="w-[9px]" /></button>
        </div>
        <div className="flex min-h-0 flex-1 items-center justify-center overflow-hidden border-t-4 border-[#434348] bg-white">
            <GlobeGore />
        </div>
        <StatusBar />
    </main>
);

const App = () => (
    <div className="flex h-screen flex-col bg-[#232323] pb-[8px] [font-family:'Open_Sans','Noto_Sans',sans-serif]">
        <Header />
        <Ribbon />
        <div className="mt-[8px] flex min-h-0 flex-1">
            <ContentsPane />
            <MapView />
        </div>
    </div>
);

export default App;
